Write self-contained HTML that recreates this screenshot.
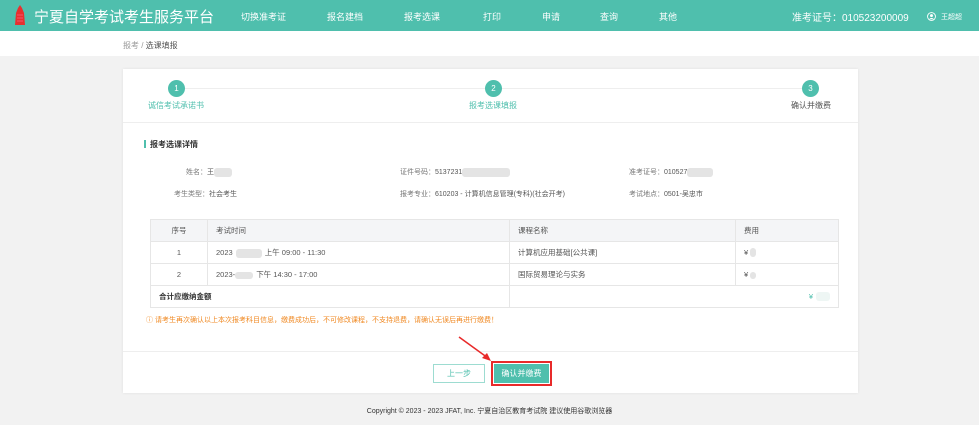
<!DOCTYPE html>
<html><head><meta charset="utf-8"><style>
*{margin:0;padding:0;box-sizing:border-box}
body{width:979px;height:425px;overflow:hidden;background:#f2f2f2;font-family:"Liberation Sans","Noto Sans CJK SC",sans-serif;position:relative;color:#555}
.a{position:absolute;white-space:nowrap}
.hdr{position:absolute;left:0;top:0;width:979px;height:31px;background:#4fbfad;color:#fff}
.bc{position:absolute;left:0;top:31px;width:979px;height:25px;background:#fff;font-size:8px}
.card{position:absolute;left:123px;top:69px;width:735px;height:324px;background:#fff;box-shadow:0 0 3px rgba(0,0,0,.08)}
.c{position:absolute;width:17px;height:17px;border-radius:50%;background:#4fbfad;color:#fff;font-size:8px;text-align:center;line-height:17px}
table{position:absolute;left:150px;top:219px;border-collapse:collapse;font-size:7.5px;color:#555}
td{border:1px solid #e6e6e6;height:22px;padding:0 8px}
.blur{display:inline-block;background:#e4e4e4;border-radius:3px;vertical-align:middle}
</style></head><body>
<div class="hdr">
<svg class="a" style="left:14px;top:5px" width="12" height="21" viewBox="0 0 12 21"><path d="M6 0 L4 3 L2 8 L1 20 L11 20 L10 8 L8 3 Z" fill="#e8302f"/><path d="M3 10h6M3 13h6M3 16h6" stroke="#f7a" stroke-width=".6"/></svg>
<div class="a" style="left:34px;top:6px;font-size:15px">宁夏自学考试考生服务平台</div>
<div class="a" style="left:241px;top:10px;font-size:9px">切换准考证</div>
<div class="a" style="left:327px;top:10px;font-size:9px">报名建档</div>
<div class="a" style="left:404px;top:10px;font-size:9px">报考选课</div>
<div class="a" style="left:483px;top:10px;font-size:9px">打印</div>
<div class="a" style="left:542px;top:10px;font-size:9px">申请</div>
<div class="a" style="left:600px;top:10px;font-size:9px">查询</div>
<div class="a" style="left:659px;top:10px;font-size:9px">其他</div>
<div class="a" style="left:792px;top:9px;font-size:10px">准考证号：010523200009</div>
<svg class="a" style="left:927px;top:12px" width="9" height="9" viewBox="0 0 10 10"><circle cx="5" cy="5" r="4.4" fill="none" stroke="#fff"/><circle cx="5" cy="4" r="1.6" fill="#fff"/><path d="M2.2 8 Q5 5 7.8 8" fill="#fff"/></svg>
<div class="a" style="left:941px;top:12px;font-size:7px">王超超</div>
</div>
<div class="bc"><div class="a" style="left:123px;top:9px;color:#999">报考 / <span style="color:#555">选课填报</span></div></div>
<div class="card">
<div class="a" style="left:54px;top:19px;width:634px;height:1px;background:#eee"></div>
<div class="c" style="left:45px;top:11px">1</div>
<div class="c" style="left:362px;top:11px">2</div>
<div class="c" style="left:679px;top:11px">3</div>
<div class="a" style="left:25px;top:31px;font-size:8px;color:#4fbfad">诚信考试承诺书</div>
<div class="a" style="left:346px;top:31px;font-size:8px;color:#4fbfad">报考选课填报</div>
<div class="a" style="left:668px;top:31px;font-size:8px;color:#555">确认并缴费</div>
<div class="a" style="left:0;top:53px;width:735px;height:1px;background:#eee"></div>
<div class="a" style="left:21px;top:71px;width:2px;height:8px;background:#4fbfad"></div>
<div class="a" style="left:27px;top:70px;font-size:8px;color:#333;font-weight:bold">报考选课详情</div>
<div class="a" style="left:63px;top:98px;font-size:7px;color:#777">姓名：<span style="color:#555">王</span><span class="blur" style="width:18px;height:9px"></span></div>
<div class="a" style="left:277px;top:98px;font-size:7px;color:#777">证件号码：<span style="color:#555">5137231</span><span class="blur" style="width:48px;height:9px"></span></div>
<div class="a" style="left:506px;top:98px;font-size:7px;color:#777">准考证号：<span style="color:#555">010527</span><span class="blur" style="width:26px;height:9px"></span></div>
<div class="a" style="left:51px;top:120px;font-size:7px;color:#777">考生类型：<span style="color:#555">社会考生</span></div>
<div class="a" style="left:277px;top:120px;font-size:7px;color:#777">报考专业：<span style="color:#555">610203 - 计算机信息管理(专科)(社会开考)</span></div>
<div class="a" style="left:506px;top:120px;font-size:7px;color:#777">考试地点：<span style="color:#555">0501-吴忠市</span></div>
<div class="a" style="left:23px;top:246px;font-size:7px;color:#f08a24">ⓘ 请考生再次确认以上本次报考科目信息，缴费成功后，不可修改课程，不支持退费，请确认无误后再进行缴费！</div>
<div class="a" style="left:0;top:282px;width:735px;height:1px;background:#eee"></div>
<div class="a" style="left:310px;top:295px;width:52px;height:19px;border:1px solid #9ddcd1;color:#4fbfad;font-size:8px;text-align:center;line-height:17px">上一步</div>
<div class="a" style="left:368px;top:292px;width:61px;height:25px;border:2px solid #e82a2a"></div>
<div class="a" style="left:371px;top:295px;width:55px;height:19px;background:#4fbfad;color:#fff;font-size:8px;text-align:center;line-height:19px">确认并缴费</div>
</div>
<svg class="a" style="left:455px;top:333px" width="40" height="32"><line x1="4" y1="4" x2="33" y2="25" stroke="#e82a2a" stroke-width="1.5"/><path d="M36 28 L27 25 L32 20 Z" fill="#e82a2a"/></svg>
<table>
<tr style="background:#f4f5f7"><td style="width:57px;text-align:center">序号</td><td style="width:302px">考试时间</td><td style="width:226px">课程名称</td><td style="width:103px">费用</td></tr>
<tr><td style="text-align:center">1</td><td>2023<span class="blur" style="width:26px;height:9px;margin:0 3px"></span>上午 09:00 - 11:30</td><td>计算机应用基础[公共课]</td><td>¥<span class="blur" style="width:6px;height:9px;margin-left:2px"></span></td></tr>
<tr><td style="text-align:center">2</td><td>2023-<span class="blur" style="width:18px;height:7px;margin:0 3px 0 0"></span>下午 14:30 - 17:00</td><td>国际贸易理论与实务</td><td>¥<span class="blur" style="width:6px;height:7px;margin-left:2px"></span></td></tr>
<tr><td colspan="2" style="font-weight:bold;color:#333">合计应缴纳金额</td><td colspan="2" style="text-align:right;color:#4fbfad">¥<span class="blur" style="width:14px;height:9px;margin-left:3px;background:#eef6f4"></span></td></tr>
</table>
<div class="a" style="left:0;top:406px;width:979px;text-align:center;font-size:7px;color:#333">Copyright © 2023 - 2023 JFAT, Inc. 宁夏自治区教育考试院 建议使用谷歌浏览器</div>
</body></html>
